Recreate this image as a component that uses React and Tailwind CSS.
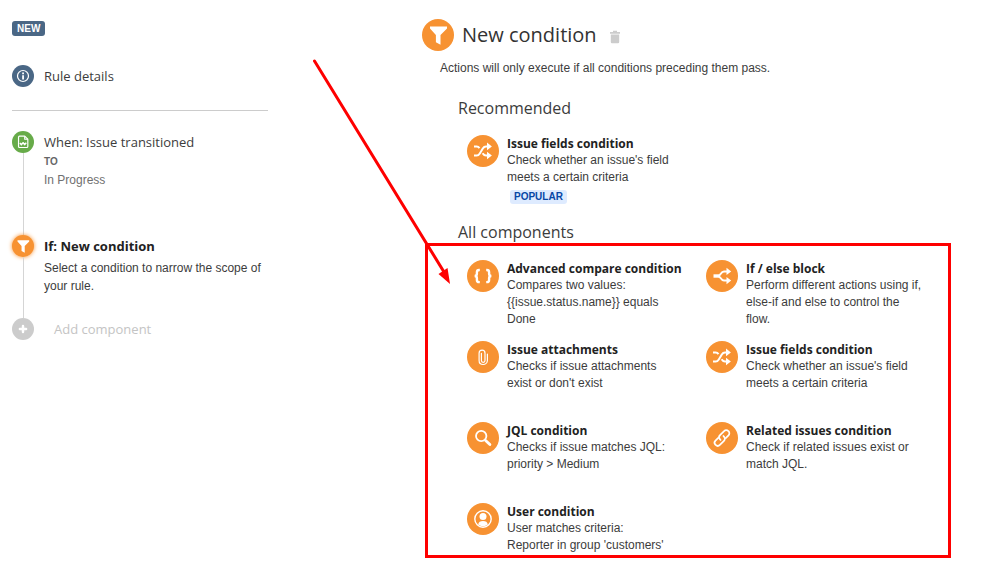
const ICONS = {
  filter: (
    <path d="M8 7.5h17v2l-6.500 6.500v9.800l-4.600-2.600V16L8 9.500z" fill="currentColor" />
  ),
  shuffle: (
    <>
      <g fill="none" stroke="currentColor" strokeWidth="2">
        <path d="M7 20.500h2.600c1.600 0 2.400-.8 3.200-2.100l3-5c.8-1.300 1.700-2 3.200-2H21" />
        <path d="M7 11.500h2.600c1.400 0 2.200.6 2.900 1.600" />
        <path d="M15.600 18.300c.9 1.500 1.800 2.200 3.400 2.200h2" />
      </g>
      <path d="M20 7.600l4.900 3.800-4.900 3.800zM20 16.700l4.900 3.800-4.900 3.800z" fill="currentColor" />
    </>
  ),
  braces: (
    <g fill="none" stroke="currentColor" strokeWidth="2.400">
      <path d="M12.800 10h-.7c-1.600 0-2.200.8-2.200 2.200v1.600c0 1.400-.6 2.200-2.300 2.200 1.700 0 2.300.8 2.300 2.200v1.700c0 1.400.6 2.200 2.200 2.200h.7" />
      <path d="M19.200 10h.7c1.600 0 2.200.8 2.200 2.200v1.600c0 1.400.6 2.200 2.300 2.200-1.700 0-2.300.8-2.300 2.200v1.700c0 1.400-.6 2.200-2.200 2.200h-.7" />
    </g>
  ),
  branch: (
    <>
      <path d="M7.500 14.300H13v3.400H7.500z" fill="currentColor" />
      <g fill="none" stroke="currentColor" strokeWidth="2">
        <path d="M12 16c2.500 0 2.700-4.600 6-4.600h3" />
        <path d="M12 16c2.500 0 2.700 4.600 6 4.600h3" />
      </g>
      <path d="M20.500 7.700l4.700 3.700-4.700 3.700zM20.500 16.900l4.700 3.700-4.700 3.700z" fill="currentColor" />
    </>
  ),
  clip: (
    <path
      d="M18 13v6.600a1.800 1.800 0 0 1-3.600 0v-7.200M18 13v-.8c0-1.900-1.200-3-2.900-3s-3 1.100-3 3v7.300c0 2.400 1.700 4 4 4s4.300-1.600 4.300-4v-6.300"
      fill="none"
      stroke="currentColor"
      strokeWidth="1.200"
      strokeLinecap="round"
    />
  ),
  search: (
    <g fill="none" stroke="currentColor" strokeLinecap="round">
      <circle cx="14.200" cy="14" r="5.200" strokeWidth="1.800" />
      <path d="M18.600 18.400l4.300 4.200" strokeWidth="2.800" />
    </g>
  ),
  link: (
    <g
      transform="rotate(-45 16 16)"
      fill="none"
      stroke="currentColor"
      strokeWidth="1.700"
      strokeLinecap="round"
    >
      <path d="M13.500 13.200H9.600a3 3 0 0 0-3 3v.2a3 3 0 0 0 3 3h5.800a3 3 0 0 0 3-3v-.8" />
      <path d="M18.500 18.800h3.900a3 3 0 0 0 3-3v-.2a3 3 0 0 0-3-3h-5.800a3 3 0 0 0-3 3v.8" />
    </g>
  ),
  user: (
    <>
      <circle cx="16" cy="16" r="8.200" fill="none" stroke="currentColor" strokeWidth="1.400" />
      <circle cx="16" cy="13.400" r="3.500" fill="currentColor" />
      <path d="M11.200 21.600c.3-2.500 2.100-3.500 4.800-3.500s4.500 1 4.800 3.500A7 7 0 0 1 16 23.300a7 7 0 0 1-4.800-1.700z" fill="currentColor" />
    </>
  ),
  info: (
    <>
      <circle cx="16" cy="16" r="8" fill="none" stroke="currentColor" strokeWidth="1.800" />
      <path d="M14.800 11h2.600v2.400h-2.600zM14.800 14.800h2.600V21h-2.600z" fill="currentColor" />
    </>
  ),
  page: (
    <g fill="none" stroke="currentColor" strokeWidth="1.700" strokeLinejoin="round">
      <path d="M11 7.500h7.500l4.500 4.500v10.500a1.500 1.500 0 0 1-1.500 1.500H11a1.500 1.500 0 0 1-1.500-1.500V9A1.500 1.500 0 0 1 11 7.500z" />
      <path d="M18.500 7.500V12H23" />
      <path d="M11.500 17.500l2.200 2.300 2.400-2.800 2.300 2.800 2.300-2.800" strokeWidth="2.200" />
    </g>
  ),
  plus: (
    <path d="M16 11.500v9M11.500 16h9" stroke="currentColor" strokeWidth="3.600" strokeLinecap="round" />
  ),
};

const RECOMMENDED = {
  icon: 'shuffle',
  title: 'Issue fields condition',
  text: "Check whether an issue's field meets a certain criteria",
};

const COMPONENTS = [
  {
    icon: 'braces',
    title: 'Advanced compare condition',
    text: 'Compares two values:\n{{issue.status.name}} equals Done',
  },
  {
    icon: 'branch',
    title: 'If / else block',
    text: 'Perform different actions using if, else-if and else to control the flow.',
  },
  { icon: 'clip', title: 'Issue attachments', text: "Checks if issue attachments\nexist or don't exist" },
  RECOMMENDED,
  { icon: 'search', title: 'JQL condition', text: 'Checks if issue matches JQL:\npriority > Medium' },
  { icon: 'link', title: 'Related issues condition', text: 'Check if related issues exist or match JQL.' },
  { icon: 'user', title: 'User condition', text: "User matches criteria:\nReporter in group 'customers'" },
];

function Badge({ icon, className }) {
  return (
    <span className={`block shrink-0 rounded-full text-white ${className}`}>
      <svg viewBox="0 0 32 32" className="block size-full" aria-hidden="true">
        {ICONS[icon]}
      </svg>
    </span>
  );
}

function Step({ icon, color, last, children }) {
  return (
    <li className="flex gap-[10px]">
      <div className="flex flex-col items-center">
        <Badge icon={icon} className={`size-[22px] ${color}`} />
        {!last && <span className="w-px grow bg-[#d5d5d5]" />}
      </div>
      {children}
    </li>
  );
}

function ComponentCard({ icon, title, text, tag }) {
  return (
    <button type="button" className="flex min-h-[68px] items-start gap-2 pr-1.5 text-left last-of-type:min-h-0">
      <Badge icon={icon} className="size-8 bg-[#f79232]" />
      <span className="block min-w-0">
        <span className="block whitespace-nowrap font-['Open_Sans',sans-serif] text-[12px] leading-[17px] font-bold text-[#222]">
          {title}
        </span>
        <span className="block whitespace-pre-line text-[12px] leading-[17px]">{text}</span>
        {tag && (
          <span className="mt-1 ml-[3px] block w-fit rounded-[3px] bg-[#deebff] px-1 text-[10px] leading-[14px] font-bold text-[#0747a6]">
            {tag}
          </span>
        )}
      </span>
    </button>
  );
}

function Sidebar() {
  return (
    <aside className="w-64 shrink-0 pt-[21px]">
      <span className="block w-fit rounded-[3px] bg-[#4a6785] px-[5px] text-[10px] leading-[15px] font-bold text-white">
        NEW
      </span>
      <a href="#details" className="mt-[29px] flex items-center gap-[10px]">
        <Badge icon="info" className="size-[22px] bg-[#4a6785]" />
        <span className="font-['Open_Sans',sans-serif] text-[13px] leading-[22px]">Rule details</span>
      </a>
      <hr className="mt-[23px] mb-5 border-[#ccc]" />
      <ol>
        <Step icon="page" color="bg-[#67ab49]">
          <div className="pb-[46px]">
            <h3 className="font-['Open_Sans',sans-serif] text-[13px] leading-[22px]">When: Issue transitioned</h3>
            <p className="text-[10px] leading-[18px] font-bold text-[#666]">TO</p>
            <p className="text-[12px] leading-[18px] text-[#707070]">In Progress</p>
          </div>
        </Step>
        <Step icon="filter" color="bg-[#f79232] shadow-[0_0_4px_#f79232]">
          <div className="pb-[23px]">
            <h3 className="font-['Open_Sans',sans-serif] text-[13px] leading-[22px] font-bold text-[#222]">
              If: New condition
            </h3>
            <p className="mt-0.5 text-[12px] leading-[18px]">Select a condition to narrow the scope of your rule.</p>
          </div>
        </Step>
        <Step icon="plus" color="bg-[#ccc]" last>
          <button
            type="button"
            className="ml-[10px] font-['Open_Sans',sans-serif] text-[13px] leading-[22px] text-[#c4c4c4]"
          >
            Add component
          </button>
        </Step>
      </ol>
    </aside>
  );
}

export default function App() {
  return (
    <div className="relative flex min-h-screen justify-between gap-[154px] bg-white pr-[69px] pl-3 font-['Liberation_Sans',Arial,sans-serif] text-[#3c3c3c]">
      <Sidebar />

      <main className="min-w-0 grow pt-[19px]">
        <header className="flex items-center gap-2">
          <Badge icon="filter" className="size-8 bg-[#f79232]" />
          <h1 className="font-['Open_Sans',sans-serif] text-[20px] leading-8 text-[#333]">New condition</h1>
          <button type="button" aria-label="Delete condition" className="ml-1 pt-1 text-[#ccc]">
            <svg viewBox="0 0 12 14" className="block h-[14px] w-3" aria-hidden="true">
              <path d="M1 2h3V.8h4V2h3v1.700H1zM1.800 4.600h8.400V12a1.200 1.200 0 0 1-1.200 1.200H3A1.200 1.200 0 0 1 1.800 12z" fill="currentColor" />
            </svg>
          </button>
        </header>
        <p className="mt-2 pl-[18px] text-[12px] leading-[18px]">
          Actions will only execute if all conditions preceding them pass.
        </p>

        <section className="mt-[19px] pl-9">
          <h2 className="font-['Open_Sans',sans-serif] text-[16px] leading-6">Recommended</h2>
          <div className="mt-[15px] grid grid-cols-2 gap-x-[15px] pl-[9px]">
            <ComponentCard {...RECOMMENDED} tag="POPULAR" />
          </div>
        </section>

        <section className="mt-4 pl-9">
          <h2 className="font-['Open_Sans',sans-serif] text-[16px] leading-6">All components</h2>
          <div className="relative mt-4 grid grid-cols-2 gap-x-[15px] gap-y-[13px] pl-[9px]">
            {COMPONENTS.map((item) => (
              <ComponentCard key={item.title} {...item} />
            ))}
            {/* highlight around the list, drawn over the page */}
            <div className="pointer-events-none absolute -top-[17px] -right-[21px] -bottom-1 -left-[33px] border-[3px] border-[#fe0000]" />
          </div>
        </section>
      </main>

      <svg
        viewBox="0 0 140 228"
        className="pointer-events-none absolute top-[59px] left-[312px] h-[228px] w-[140px]"
        aria-hidden="true"
      >
        <path d="M2.500 2L132 213" stroke="#fe0000" strokeWidth="3" strokeLinecap="round" />
        <path d="M138 225l-11.500-10 9-6z" fill="#fe0000" />
      </svg>
    </div>
  );
}
